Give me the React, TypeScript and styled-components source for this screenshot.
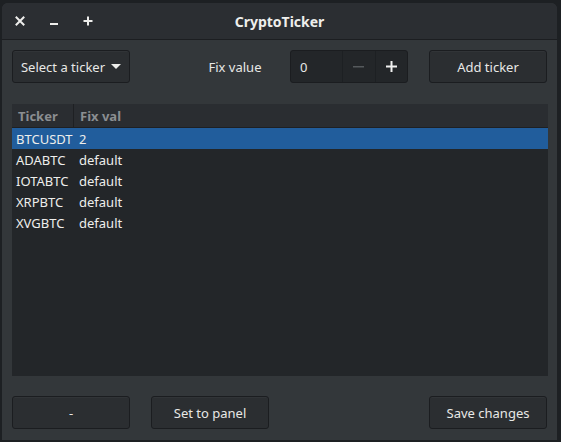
import React from "react";
import styled, { createGlobalStyle } from "styled-components";

const Global = createGlobalStyle`
  html, body { margin: 0; padding: 0; background: #1d2023; }
  body { width: 561px; height: 442px; overflow: hidden; font-family: "Noto Sans", "Open Sans", sans-serif; }
  #root { padding: 3px 4px 2px 2px; box-sizing: border-box; height: 442px; }
`;

const Window = styled.div`
  width: 555px;
  height: 437px;
  background: #33373a;
  border-radius: 6px 6px 0 0;
  display: flex;
  flex-direction: column;
  overflow: hidden;
  color: #e8e8e6;
  font-size: 13px;
`;

const HeaderBar = styled.div`
  height: 36px;
  flex: none;
  background: #2b2e32;
  border-bottom: 1px solid #1c1e21;
  display: grid;
  grid-template-columns: 1fr auto 1fr;
  align-items: center;
`;

const Controls = styled.div`
  display: flex;
  align-items: center;
  padding-left: 7px;
  gap: 12px;
`;

const CtlButton = styled.div`
  width: 22px;
  height: 22px;
  display: flex;
  align-items: center;
  justify-content: center;
  color: #f0f0f0;
`;

const Title = styled.div`
  font-weight: bold;
  font-size: 14px;
  color: #eeeeec;
`;

const Body = styled.div`
  flex: 1;
  display: flex;
  flex-direction: column;
  padding: 10px 9px 11px 10px;
`;

const Row = styled.div`
  display: flex;
  align-items: center;
  height: 33px;
  flex: none;
`;

const Button = styled.div<{ $w?: number }>`
  width: ${(p) => p.$w ?? 118}px;
  height: 33px;
  box-sizing: border-box;
  border: 1px solid #1b1d20;
  border-radius: 3px;
  background: #2b2e31;
  display: flex;
  align-items: center;
  justify-content: center;
  gap: 6px;
  color: #e8e8e6;
  box-shadow: inset 0 1px rgba(255,255,255,0.03);
`;

const Label = styled.div`
  width: 160px;
  box-sizing: border-box;
  padding-left: 50px;
  text-align: center;
`;

const Spin = styled.div`
  width: 118px;
  height: 33px;
  box-sizing: border-box;
  border: 1px solid #1b1d20;
  border-radius: 3px;
  background: #232629;
  display: flex;
  align-items: stretch;
`;

const SpinEntry = styled.div`
  width: 51px;
  display: flex;
  align-items: center;
  padding-left: 9px;
  box-sizing: border-box;
`;

const SpinBtn = styled.div<{ $dim?: boolean }>`
  flex: 1;
  display: flex;
  align-items: center;
  justify-content: center;
  border-left: 1px solid #1d2023;
  color: ${(p) => (p.$dim ? "#55595c" : "#f0f0f0")};
`;

const Spacer = styled.div<{ $w: number }>`
  width: ${(p) => p.$w}px;
  flex: none;
`;

const Table = styled.div`
  margin-top: 21px;
  height: 272px;
  flex: none;
  width: 536px;
  background: #232629;
  display: flex;
  flex-direction: column;
`;

const HeadRow = styled.div`
  height: 24px;
  background: #2a2d31;
  display: flex;
  align-items: stretch;
  color: #8b8e91;
  font-weight: bold;
  border-bottom: 1px solid #1e2023;
  box-sizing: border-box;
`;

const HeadCell = styled.div<{ $w?: number }>`
  width: ${(p) => (p.$w ? p.$w + "px" : "auto")};
  flex: ${(p) => (p.$w ? "none" : "1")};
  display: flex;
  align-items: center;
  padding-left: 6px;
  box-sizing: border-box;
  border-right: ${(p) => (p.$w ? "1px solid #1e2023" : "none")};
`;

const DataRow = styled.div<{ $sel?: boolean }>`
  height: 21px;
  display: flex;
  align-items: center;
  background: ${(p) => (p.$sel ? "#215d9c" : "transparent")};
  color: #eeeeec;
`;

const Cell = styled.div<{ $w?: number }>`
  width: ${(p) => (p.$w ? p.$w + "px" : "auto")};
  flex: ${(p) => (p.$w ? "none" : "1")};
  padding-left: 4px;
  box-sizing: border-box;
`;

const Bottom = styled(Row)`
  margin-top: 20px;
`;

const rows = [
  ["BTCUSDT", "2"],
  ["ADABTC", "default"],
  ["IOTABTC", "default"],
  ["XRPBTC", "default"],
  ["XVGBTC", "default"],
];

export default function App() {
  return (
    <>
      <Global />
      <Window>
        <HeaderBar>
          <Controls>
            <CtlButton>
              <svg width="10" height="10" viewBox="0 0 10 10">
                <path d="M1.5 1.5 L8.5 8.5 M8.5 1.5 L1.5 8.5" stroke="#eeeeec" strokeWidth="2" strokeLinecap="square" />
              </svg>
            </CtlButton>
            <CtlButton>
              <svg width="10" height="10" viewBox="0 0 10 10">
                <rect x="1" y="7" width="8" height="2" fill="#eeeeec" />
              </svg>
            </CtlButton>
            <CtlButton>
              <svg width="10" height="10" viewBox="0 0 10 10">
                <rect x="0.5" y="4" width="9" height="2" fill="#eeeeec" />
                <rect x="4" y="0.5" width="2" height="9" fill="#eeeeec" />
              </svg>
            </CtlButton>
          </Controls>
          <Title>CryptoTicker</Title>
          <div />
        </HeaderBar>
        <Body>
          <Row>
            <Button>
              <span>Select a ticker</span>
              <svg width="10" height="6" viewBox="0 0 10 6">
                <path d="M0 0 H10 L5 5 Z" fill="#eeeeec" />
              </svg>
            </Button>
            <Label>Fix value</Label>
            <Spin>
              <SpinEntry>0</SpinEntry>
              <SpinBtn $dim>
                <svg width="11" height="2" viewBox="0 0 11 2"><rect width="11" height="1.5" fill="currentColor" /></svg>
              </SpinBtn>
              <SpinBtn>
                <svg width="11" height="11" viewBox="0 0 11 11">
                  <rect x="0" y="4.5" width="11" height="2" fill="currentColor" />
                  <rect x="4.5" y="0" width="2" height="11" fill="currentColor" />
                </svg>
              </SpinBtn>
            </Spin>
            <Spacer $w={21} />
            <Button>Add ticker</Button>
          </Row>
          <Table>
            <HeadRow>
              <HeadCell $w={62}>Ticker</HeadCell>
              <HeadCell>Fix val</HeadCell>
            </HeadRow>
            {rows.map(([t, v], i) => (
              <DataRow key={t} $sel={i === 0}>
                <Cell $w={63}>{t}</Cell>
                <Cell>{v}</Cell>
              </DataRow>
            ))}
          </Table>
          <Bottom>
            <Button>-</Button>
            <Spacer $w={21} />
            <Button>Set to panel</Button>
            <Spacer $w={160} />
            <Button>Save changes</Button>
          </Bottom>
        </Body>
      </Window>
    </>
  );
}
